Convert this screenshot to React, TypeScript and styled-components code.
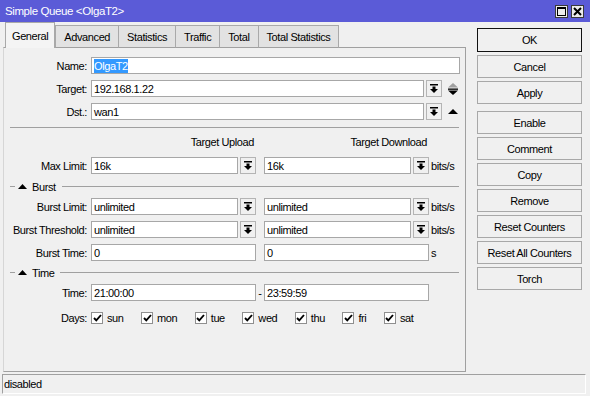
import React from 'react';
import styled, { createGlobalStyle } from 'styled-components';

const Global = createGlobalStyle`
  html, body { margin: 0; padding: 0; background: #f0f0f0; }
`;

const Window = styled.div`
  width: 590px;
  height: 396px;
  background: #f0f0f0;
  font-family: "Liberation Sans", Arial, sans-serif;
  font-size: 11px;
  letter-spacing: -0.4px;
  color: #000;
  display: flex;
  flex-direction: column;
  overflow: hidden;
`;

const TitleBar = styled.div`
  height: 22px;
  flex-shrink: 0;
  background: #5b5bd7;
  color: #fff;
  display: flex;
  align-items: center;
  padding: 0 6px 0 5px;
  font-size: 11.5px;
`;

const TitleText = styled.div`
  flex: 1;
`;

const TitleButtons = styled.div`
  display: flex;
  gap: 3px;
`;

const TitleBtn = styled.div`
  width: 13px;
  height: 13px;
  box-sizing: border-box;
  border: 1px solid #3a3a3a;
  background: #ececec;
  display: flex;
  align-items: center;
  justify-content: center;
`;

const Main = styled.div`
  height: 350px;
  display: flex;
  flex-shrink: 0;
`;

const LeftCol = styled.div`
  margin-left: 3px;
  width: 463px;
  display: flex;
  flex-direction: column;
`;

const Tabs = styled.div`
  height: 26px;
  display: flex;
  align-items: flex-end;
  padding-left: 2px;
  margin-bottom: -1px;
  position: relative;
  z-index: 1;
`;

const Tab = styled.div<{ $active?: boolean }>`
  box-sizing: border-box;
  height: ${p => (p.$active ? 26 : 23)}px;
  padding: 0 ${p => (p.$active ? 6 : 8)}px;
  border: 1px solid #a9a9a9;
  border-bottom: ${p => (p.$active ? 'none' : '1px solid #a0a0a0')};
  margin-right: ${p => (p.$active ? 0 : -1)}px;
  background: ${p => (p.$active ? '#f4f4f4' : '#e2e2e2')};
  display: flex;
  align-items: center;
  padding-top: ${p => (p.$active ? 1 : 0)}px;
  white-space: nowrap;
`;

const Panel = styled.div`
  height: 325px;
  box-sizing: border-box;
  border: 1px solid #a0a0a0;
  border-left-color: #d6d6d6;
  background: #f0f0f0;
  padding-top: 9px;
  display: flex;
  flex-direction: column;
`;

const Row = styled.div<{ $mt?: number; $h?: number }>`
  display: flex;
  align-items: center;
  height: ${p => p.$h ?? 17}px;
  margin-top: ${p => p.$mt ?? 0}px;
  flex-shrink: 0;
`;

const Label = styled.div`
  width: 87px;
  box-sizing: border-box;
  padding-right: 4px;
  text-align: right;
  white-space: nowrap;
  flex-shrink: 0;
`;

const Input = styled.div<{ $w?: number }>`
  height: 17px;
  box-sizing: border-box;
  border: 1px solid #a7a7a7;
  background: #fff;
  padding-left: 2px;
  display: flex;
  align-items: center;
  white-space: nowrap;
  overflow: hidden;
  ${p => (p.$w ? `width: ${p.$w}px; flex-shrink: 0;` : 'flex: 1; min-width: 0;')}
`;

const Selected = styled.span`
  background: #3399ff;
  color: #fff;
  line-height: 14px;
`;

const DropBtn = styled.div`
  width: 16px;
  height: 17px;
  box-sizing: border-box;
  border: 1px solid #b4b4b4;
  background: #f0f0f0;
  margin-left: 2px;
  flex-shrink: 0;
  display: flex;
  align-items: center;
  justify-content: center;
`;

const Spinner = styled.div`
  width: 11px;
  margin-left: 5px;
  display: flex;
  align-items: center;
  justify-content: center;
`;

const Col = styled.div<{ $right?: boolean }>`
  width: 165px;
  flex-shrink: 0;
  display: flex;
  align-items: center;
  justify-content: ${p => (p.$right ? 'flex-end' : 'flex-start')};
  padding-right: ${p => (p.$right ? 2 : 0)}px;
  box-sizing: border-box;
`;

const ColGap = styled.div`
  width: 8px;
  flex-shrink: 0;
  text-align: center;
`;

const Unit = styled.div`
  margin-left: 2px;
  white-space: nowrap;
`;

const Separator = styled.div`
  margin: 7px 6px 0 6px;
  height: 1px;
  background: #a0a0a0;
  flex-shrink: 0;
`;

const GroupHead = styled.div<{ $mt: number }>`
  display: flex;
  align-items: center;
  height: 13px;
  margin: ${p => p.$mt}px 6px 0 6px;
  flex-shrink: 0;
`;

const Rule = styled.div<{ $w?: number }>`
  height: 1px;
  background: #a0a0a0;
  ${p => (p.$w ? `width: ${p.$w}px;` : 'flex: 1;')}
`;

const GroupTitle = styled.div`
  margin: 0 6px 0 3px;
`;

const Days = styled.div`
  display: flex;
  align-items: center;
  gap: 17.5px;
`;

const Day = styled.label`
  display: flex;
  align-items: center;
  gap: 4px;
`;

const Check = styled.div`
  width: 12px;
  height: 12px;
  box-sizing: border-box;
  border: 1px solid #8f8f8f;
  background: #fff;
  display: flex;
  align-items: center;
  justify-content: center;
`;

const RightCol = styled.div`
  margin-left: 11px;
  width: 105px;
  padding-top: 6px;
  display: flex;
  flex-direction: column;
  gap: 3px;
`;

const Button = styled.div<{ $default?: boolean; $sep?: boolean }>`
  height: ${p => (p.$default ? 24 : 23)}px;
  box-sizing: border-box;
  border: 1px solid ${p => (p.$default ? '#111' : '#a8a8a8')};
  background: #f0f0f0;
  display: flex;
  align-items: center;
  justify-content: center;
  white-space: nowrap;
  margin-top: ${p => (p.$sep ? 4 : 0)}px;
`;

const StatusBar = styled.div`
  margin: 2px 0 2px 2px;
  width: 584px;
  height: 20px;
  box-sizing: border-box;
  border-top: 1px solid #a0a0a0;
  border-left: 1px solid #a0a0a0;
  border-right: 1px solid #ffffff;
  border-bottom: 1px solid #ffffff;
  padding-left: 1px;
  display: flex;
  align-items: center;
`;

const DropIcon = () => (
  <svg width="8" height="9" viewBox="0 0 8 9">
    <rect x="0" y="0" width="8" height="1.5" fill="#000" />
    <rect x="2.5" y="2.5" width="3" height="2.5" fill="#000" />
    <polygon points="0,5 8,5 4,9" fill="#000" />
  </svg>
);

const UpDownIcon = () => (
  <svg width="10" height="12" viewBox="0 0 10 12">
    <polygon points="0,4.5 10,4.5 5,0" fill="#a0a0a0" />
    <rect x="0" y="5.5" width="10" height="1.3" fill="#000" />
    <polygon points="0,7.5 10,7.5 5,12" fill="#000" />
  </svg>
);

const UpIcon = () => (
  <svg width="10" height="5" viewBox="0 0 10 5">
    <polygon points="0,5 10,5 5,0" fill="#000" />
  </svg>
);

const CheckMark = () => (
  <svg width="9" height="8" viewBox="0 0 9 8">
    <path d="M1 4 L3.3 6.4 L8 1" stroke="#000" strokeWidth="1.9" fill="none" />
  </svg>
);

const Dropdown = () => (
  <DropBtn>
    <DropIcon />
  </DropBtn>
);

const ComboCol = ({ value }: { value: string }) => (
  <Col>
    <Input>{value}</Input>
    <Dropdown />
  </Col>
);

const Group = ({ title, mt }: { title: string; mt: number }) => (
  <GroupHead $mt={mt}>
    <Rule $w={5} />
    <svg width="13" height="5" viewBox="0 0 13 5" style={{ marginLeft: 1 }}>
      <polygon points="2,5 11,5 6.5,0" fill="#000" />
    </svg>
    <GroupTitle>{title}</GroupTitle>
    <Rule />
  </GroupHead>
);

const days = ['sun', 'mon', 'tue', 'wed', 'thu', 'fri', 'sat'];
const tabs = ['General', 'Advanced', 'Statistics', 'Traffic', 'Total', 'Total Statistics'];

export default function App() {
  return (
    <Window>
      <Global />
      <TitleBar>
        <TitleText>Simple Queue &lt;OlgaT2&gt;</TitleText>
        <TitleButtons>
          <TitleBtn>
            <svg width="9" height="9" viewBox="0 0 9 9">
              <rect x="0.5" y="0.5" width="8" height="8" fill="none" stroke="#000" />
              <rect x="0" y="0" width="9" height="2" fill="#000" />
            </svg>
          </TitleBtn>
          <TitleBtn>
            <svg width="9" height="9" viewBox="0 0 9 9">
              <path d="M1 1 L8 8 M8 1 L1 8" stroke="#000" strokeWidth="2" />
            </svg>
          </TitleBtn>
        </TitleButtons>
      </TitleBar>
      <Main>
        <LeftCol>
          <Tabs>
            {tabs.map((t, i) => (
              <Tab key={t} $active={i === 0}>
                {t}
              </Tab>
            ))}
          </Tabs>
          <Panel>
            <Row>
              <Label>Name:</Label>
              <Input $w={369}>
                <Selected>OlgaT2</Selected>
              </Input>
            </Row>
            <Row $mt={6}>
              <Label>Target:</Label>
              <Input $w={333}>192.168.1.22</Input>
              <Dropdown />
              <Spinner>
                <UpDownIcon />
              </Spinner>
            </Row>
            <Row $mt={6}>
              <Label>Dst.:</Label>
              <Input $w={333}>wan1</Input>
              <Dropdown />
              <Spinner>
                <UpIcon />
              </Spinner>
            </Row>
            <Separator />
            <Row $mt={7} $h={14}>
              <Label />
              <Col $right>Target Upload</Col>
              <ColGap />
              <Col $right>Target Download</Col>
            </Row>
            <Row $mt={8}>
              <Label>Max Limit:</Label>
              <ComboCol value="16k" />
              <ColGap />
              <ComboCol value="16k" />
              <Unit>bits/s</Unit>
            </Row>
            <Group title="Burst" mt={6} />
            <Row $mt={5}>
              <Label>Burst Limit:</Label>
              <ComboCol value="unlimited" />
              <ColGap />
              <ComboCol value="unlimited" />
              <Unit>bits/s</Unit>
            </Row>
            <Row $mt={6}>
              <Label>Burst Threshold:</Label>
              <ComboCol value="unlimited" />
              <ColGap />
              <ComboCol value="unlimited" />
              <Unit>bits/s</Unit>
            </Row>
            <Row $mt={6}>
              <Label>Burst Time:</Label>
              <Col>
                <Input>0</Input>
              </Col>
              <ColGap />
              <Col>
                <Input>0</Input>
              </Col>
              <Unit>s</Unit>
            </Row>
            <Group title="Time" mt={5} />
            <Row $mt={5}>
              <Label>Time:</Label>
              <Col>
                <Input>21:00:00</Input>
              </Col>
              <ColGap>-</ColGap>
              <Col>
                <Input>23:59:59</Input>
              </Col>
            </Row>
            <Row $mt={10} $h={13}>
              <Label>Days:</Label>
              <Days>
                {days.map(d => (
                  <Day key={d}>
                    <Check>
                      <CheckMark />
                    </Check>
                    {d}
                  </Day>
                ))}
              </Days>
            </Row>
          </Panel>
        </LeftCol>
        <RightCol>
          <Button $default>OK</Button>
          <Button>Cancel</Button>
          <Button>Apply</Button>
          <Button $sep>Enable</Button>
          <Button>Comment</Button>
          <Button>Copy</Button>
          <Button>Remove</Button>
          <Button>Reset Counters</Button>
          <Button>Reset All Counters</Button>
          <Button>Torch</Button>
        </RightCol>
      </Main>
      <StatusBar>disabled</StatusBar>
    </Window>
  );
}
